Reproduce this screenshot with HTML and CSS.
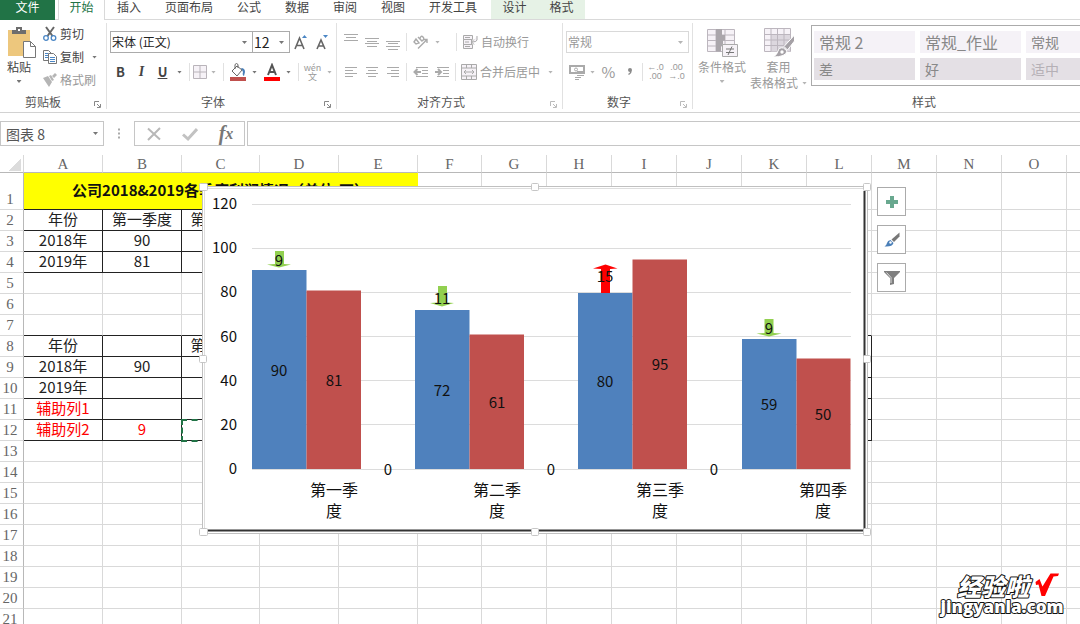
FILE: index.html
```html
<!DOCTYPE html>
<html lang="zh-CN">
<head>
<meta charset="utf-8">
<title>图表 8</title>
<link rel="stylesheet" href="styles.css">
</head>
<body>
<nav class="tabs">
  <button class="tab file">文件</button>
  <button class="tab active">开始</button>
  <button class="tab">插入</button>
  <button class="tab">页面布局</button>
  <button class="tab">公式</button>
  <button class="tab">数据</button>
  <button class="tab">审阅</button>
  <button class="tab">视图</button>
  <button class="tab">开发工具</button>
  <span class="context">
    <button class="tab">设计</button>
    <button class="tab">格式</button>
  </span>
</nav>

<section class="ribbon">
  <div class="group clipboard">
    <div class="tools">
      <button class="big paste">
        <svg width="30" height="32" viewBox="0 0 30 32"><path fill="#edc77d" d="M1 4h22v26H1z"/><path fill="#6d6d6d" d="M5 8V4h4V1h6v3h4v4z"/><path fill="#fff" d="M11 3h2v2h-2z"/><path fill="#fff" stroke="#777" d="M16.500 15.500h7l5 5v11h-12z"/><path fill="none" stroke="#777" d="M23.500 15.500v5h5"/></svg>
        <span>粘贴</span>
        <i class="arrow"></i>
      </button>
      <div class="stack">
        <button class="line"><svg width="14" height="16" viewBox="0 0 14 16"><path fill="none" stroke="#666" stroke-width="2" d="M3 1l6.500 9M11 1L4.500 10"/><circle cx="3" cy="12" r="2.300" fill="none" stroke="#4a86c5" stroke-width="1.300"/><circle cx="10.500" cy="12" r="2.300" fill="none" stroke="#4a86c5" stroke-width="1.300"/></svg>剪切</button>
        <button class="line"><svg width="14" height="16" viewBox="0 0 14 16"><path fill="#fff" stroke="#777" d="M.5 1.500h5l3 3v7h-8z"/><path stroke="#4a86c5" d="M2 4.500h3M2 6.500h3M2 8.500h3"/><path fill="#fff" stroke="#777" d="M5.500 4.500h5l3 3v7h-8z"/><path stroke="#4a86c5" d="M7 8.500h5M7 10.500h5M7 12.500h5"/></svg>复制<i class="arrow"></i></button>
        <button class="line off"><svg width="14" height="16" viewBox="0 0 14 16"><path fill="#b5b5b5" d="M0 6l5-2 4 6-3 5zM6 4l2-1 3 5-2 1zM9 4l3-3 2 2-3 3z"/></svg>格式刷</button>
      </div>
    </div>
    <footer>剪贴板<svg class="launch" width="7" height="7"><path d="M.5 5V.500H5M3 3l3 3M6.500 3v3.500H3"/></svg></footer>
  </div>

  <div class="group font">
    <div class="tools rows">
      <div class="row">
        <span class="combo name"><select aria-label="字体"><option>宋体 (正文)</option></select></span>
        <span class="combo size"><select aria-label="字号"><option>12</option></select></span>
        <button class="btn"><svg width="16" height="16" viewBox="0 0 16 16"><path fill="none" stroke="#666" stroke-width="1.600" d="M2 15L6.500 4 11 15M3.500 11.500h6"/><path fill="#4a86c5" d="M9 4l2.500-3L14 4z"/></svg></button>
        <button class="btn"><svg width="16" height="16" viewBox="0 0 16 16"><path fill="none" stroke="#666" stroke-width="1.600" d="M3 15L7 6l4 9M4.500 12h5"/><path fill="#4a86c5" d="M9 1h5l-2.500 3z"/></svg></button>
      </div>
      <div class="row">
        <button class="btn b">B</button>
        <button class="btn i">I</button>
        <button class="btn u">U</button><i class="arrow"></i>
        <hr>
        <button class="btn narrow"><svg width="14" height="14" viewBox="0 0 14 14"><path fill="#f6f2f7" stroke="#b9b4ba" d="M.5.5h13v13H.5zM7 .5v13M.5 7h13"/></svg></button><i class="arrow off"></i>
        <hr>
        <button class="btn"><svg width="18" height="18" viewBox="0 0 18 18"><path fill="#fff" stroke="#666" d="M3 8l5-5 5 4-5 6zM6 6V1.500q1.500-2 3 0V5"/><path fill="#4a7fb8" d="M12 5q4 0 4 4l-1 4q-2-1-1-4z"/><path fill="#c0504d" d="M1 14h16v4H1z"/></svg></button><i class="arrow"></i>
        <button class="btn"><svg width="18" height="18" viewBox="0 0 18 18"><path fill="none" stroke="#555" stroke-width="2" d="M5 12L9 2l4 10M6 9h6"/><path fill="#f00" d="M1 14h16v4H1z"/></svg></button><i class="arrow"></i>
        <hr>
        <button class="btn pinyin"><span>wén</span><span>文</span></button><i class="arrow off"></i>
      </div>
    </div>
    <footer>字体<svg class="launch" width="7" height="7"><path d="M.5 5V.500H5M3 3l3 3M6.500 3v3.500H3"/></svg></footer>
  </div>

  <div class="group align off">
    <div class="tools rows">
      <div class="row">
        <button class="btn"><svg width="16" height="16" viewBox="0 0 16 16"><path d="M1 .5h14M3 3.500h10M1 6.500h14"/></svg></button>
        <button class="btn"><svg width="16" height="16" viewBox="0 0 16 16"><path d="M1 4.500h14M3 7.500h10M1 9.500h14M3 12.500h10"/></svg></button>
        <button class="btn"><svg width="16" height="16" viewBox="0 0 16 16"><path d="M1 7.500h14M3 9.500h10M1 12.500h14M3 15.500h10"/></svg></button>
        <hr>
        <button class="btn"><svg width="16" height="16" viewBox="0 0 16 16"><path d="M5 14.500L14 5.500M10.500 5.500H14V9M1 8l2-3 3 4-3 1zM5 3l4 4q3-2 1-4T7 4.500" stroke-width="1.400"/></svg></button><i class="arrow"></i>
        <hr class="far">
        <button class="line"><svg width="16" height="16" viewBox="0 0 16 16"><path fill="#f6f2f7" d="M1.500 1.500h9v4h-9zM1.500 5.500h8v5h-8zM1.500 10.500h9v4h-9zM3 3.500h5M3 8h4M3 12.500h5M15 2v4q0 2-5 2M12 5.500L9.500 8l2.500 2.500"/></svg>自动换行</button>
      </div>
      <div class="row">
        <button class="btn"><svg width="16" height="16" viewBox="0 0 16 16"><path d="M2 3.500h12M2 6.500h8M2 9.500h12M2 12.500h8"/></svg></button>
        <button class="btn"><svg width="16" height="16" viewBox="0 0 16 16"><path d="M2 3.500h12M4 6.500h8M2 9.500h12M4 12.500h8"/></svg></button>
        <button class="btn"><svg width="16" height="16" viewBox="0 0 16 16"><path d="M2 3.500h12M6 6.500h8M2 9.500h12M6 12.500h8"/></svg></button>
        <hr>
        <button class="btn"><svg width="16" height="16" viewBox="0 0 16 16"><path d="M3 3.500h12M9 6.500h6M9 9.500h6M3 12.500h12"/><path stroke-width="2" d="M8 8H2M4.500 5L1.500 8l3 3"/></svg></button>
        <button class="btn"><svg width="16" height="16" viewBox="0 0 16 16"><path d="M3 3.500h12M9 6.500h6M9 9.500h6M3 12.500h12"/><path stroke-width="2" d="M1 8h6M4 5l3 3-3 3"/></svg></button>
        <hr>
        <button class="line"><svg width="16" height="16" viewBox="0 0 16 16"><path fill="#f6f2f7" d="M.5.5h15v15H.5zM.5 4h15M.5 12h15M5.500.5V4M10.500.5V4M5.500 12v3.500M10.500 12v3.500"/><path d="M3 8h10M5 6L3 8l2 2M11 6l2 2-2 2"/></svg>合并后居中<i class="arrow"></i></button>
      </div>
    </div>
    <footer>对齐方式<svg class="launch" width="7" height="7"><path d="M.5 5V.500H5M3 3l3 3M6.500 3v3.500H3"/></svg></footer>
  </div>

  <div class="group number off">
    <div class="tools rows">
      <div class="row">
        <span class="combo format"><select aria-label="数字格式"><option>常规</option></select></span>
      </div>
      <div class="row">
        <button class="btn"><svg width="16" height="16" viewBox="0 0 16 16"><path stroke-width="2" d="M1 2h14v7H1z"/><circle cx="7" cy="5.500" r="1.500"/><path fill="#f6f2f7" d="M8 7.500h7M8 9.500h7M8 11.500h7M6 13.500h6M6 15.500h4"/></svg></button><i class="arrow"></i>
        <button class="btn percent">%</button>
        <button class="btn comma"><svg width="8" height="12" viewBox="0 0 8 12"><path stroke="none" fill="#8a8a8a" d="M4 2a2 2 0 0 1 2 2q0 3-3 5l-1-1q2-1 2-2a2 2 0 0 1 0-4z"/></svg></button>
        <hr>
        <button class="btn decimals"><span>←.0</span><span>.00</span></button>
        <button class="btn decimals"><span>.00</span><span>→.0</span></button>
      </div>
    </div>
    <footer>数字<svg class="launch" width="7" height="7"><path d="M.5 5V.500H5M3 3l3 3M6.500 3v3.500H3"/></svg></footer>
  </div>

  <div class="group styles off">
    <div class="tools">
      <button class="big">
        <svg width="32" height="30" viewBox="0 0 32 30"><path fill="#f6f2f7" stroke="#bcb6be" d="M1.500 1.500h27v22h-27zM1.500 7h27M1.500 12.500h27M1.500 18h27M10 1.500v22M19 1.500v22"/><path stroke="none" fill="#aaa6ab" d="M10 1h6v6h-6zM10 7h9v5.500h-9zM10 12.500h7V18h-7zM10 18h5v5.500h-5z"/><path fill="#f6f2f7" stroke="#aaa" d="M16.500 16.500h15v12h-15z"/><path stroke="#777" d="M20 21h8M20 24.500h8M26 18.500l-4 8.500"/></svg>
        <span>条件格式</span>
        <i class="arrow"></i>
      </button>
      <button class="big">
        <svg width="32" height="30" viewBox="0 0 32 30"><path fill="#f6f2f7" stroke="#bcb6be" d="M1.500.5h26v23h-26z"/><path stroke="none" fill="#dcd7de" d="M8 6.500h19v17H8z"/><path stroke="#bcb6be" d="M1.500 6.500h26M1.500 12h26M1.500 17.500h26M8 .5v23M14.500.5v23M21 .5v23"/><path stroke="#fff" fill="#a5a1a6" d="M31.500 7v6l-7 9-3.500-3.500zM20.500 20l3.500 3q-1 6-14 6 4-2 5-6t5.500-3z"/><circle cx="19" cy="24" r="1.700" fill="#fff" stroke="none"/></svg>
        <span>套用</span>
        <span class="with-arrow">表格格式<i class="arrow"></i></span>
      </button>
      <div class="gallery">
        <button class="style">常规 2</button>
        <button class="style">常规_作业</button>
        <button class="style small">常规</button>
        <button class="style dark">差</button>
        <button class="style dark">好</button>
        <button class="style dark small pale">适中</button>
      </div>
    </div>
    <footer>样式</footer>
  </div>
</section>

<section class="formula">
  <span class="combo cellname"><input aria-label="名称框" value="图表 8"></span>
  <span class="dots"></span>
  <div class="actions">
    <button aria-label="取消"><svg width="16" height="16" viewBox="0 0 16 16"><path fill="none" stroke="#b8b8b8" stroke-width="2" d="M2 2.500l12 11M14 2L2 14"/></svg></button>
    <button aria-label="输入"><svg width="16" height="16" viewBox="0 0 16 16"><path fill="none" stroke="#c2c2c2" stroke-width="3" d="M1 8.500L6 13l9-10"/></svg></button>
    <button class="fx">f<span>x</span></button>
  </div>
  <input class="entry" aria-label="编辑栏">
</section>

<main class="sheet">
  <table class="grid" id="grid"></table>

  <svg class="chart" width="670" height="350" viewBox="202 186 670 350" role="img" aria-label="季度利润图表">
    <path fill="#fff" d="M202 186h666v348H202z"/>
    <path class="frame" d="M202.500 186.500h665v347h-665z"/>
    <path class="frame light" d="M204.500 188.500h660v342h-660z"/>
    <path class="shadow" d="M207 530.500h657.500V191"/>
    <path class="rule" d="M252 204.500h599M252 248.500h599M252 292.500h599M252 336.500h599M252 380.500h599M252 424.500h599M252 469.500h599"/>
    <g class="blue"><rect x="252" y="270" width="54.500" height="199"/><rect x="415" y="310" width="54.500" height="159"/><rect x="578" y="293" width="54.500" height="176"/><rect x="742" y="339" width="54.500" height="130"/></g>
    <g class="red"><rect x="306.500" y="290.500" width="54.500" height="178.500"/><rect x="469.500" y="334.500" width="54.500" height="134.500"/><rect x="632.500" y="259.500" width="54.500" height="209.500"/><rect x="796.500" y="358.500" width="54" height="110.500"/></g>
    <g fill="#92d050"><path d="M275 251h9v13l7 .5-12 3-12-3 8-.5z"/><path d="M438 286h9v16.500l7 .5-12 3.500-12-3.500 8-.5z"/><path d="M764.500 319h9v14l8 .5-12.500 3-12.500-3 8-.5z"/></g>
    <path fill="#f00" d="M605.500 264.500l12 4-7.500.5v24h-9v-24l-8-.5z"/>
    <g class="axis"><text x="237" y="209">120</text><text x="237" y="253">100</text><text x="237" y="297">80</text><text x="237" y="342">60</text><text x="237" y="386">40</text><text x="237" y="430">20</text><text x="237" y="474">0</text></g>
    <g class="values">
      <text x="279" y="266">9</text><text x="442" y="304">11</text><text x="605" y="282">15</text><text x="769" y="334">9</text>
      <text x="279" y="376">90</text><text x="334" y="386">81</text><text x="442" y="396">72</text><text x="497" y="408">61</text>
      <text x="605" y="387">80</text><text x="660" y="370">95</text><text x="769" y="410">59</text><text x="823" y="420">50</text>
      <text x="388" y="475">0</text><text x="551" y="475">0</text><text x="714" y="475">0</text>
    </g>
    <g class="category">
      <text x="334" y="496">第一季<tspan x="334" dy="21">度</tspan></text>
      <text x="497" y="496">第二季<tspan x="497" dy="21">度</tspan></text>
      <text x="660" y="496">第三季<tspan x="660" dy="21">度</tspan></text>
      <text x="823" y="496">第四季<tspan x="823" dy="21">度</tspan></text>
    </g>
  </svg>
  <svg class="handles" width="674" height="354" viewBox="199 183 674 354" aria-hidden="true">
    <rect x="199.500" y="183.500" width="8" height="7" rx="1"/><rect x="531.500" y="183.500" width="7" height="7" rx="1"/><rect x="863.500" y="183.500" width="7" height="7" rx="1"/>
    <rect x="199.500" y="355.500" width="7" height="7" rx="1"/><rect x="863.500" y="355.500" width="7" height="7" rx="1"/>
    <rect x="199.500" y="528.500" width="8" height="7" rx="1"/><rect x="531.500" y="528.500" width="7" height="7" rx="1"/><rect x="863.500" y="528.500" width="7" height="7" rx="1"/>
  </svg>

  <div class="chart-tools">
    <button aria-label="图表元素"><svg width="16" height="16" viewBox="0 0 16 16"><path fill="#69a88f" d="M6 2h4v4h4v4h-4v4H6v-4H2V6h4z"/></svg></button>
    <button aria-label="图表样式"><svg width="16" height="16" viewBox="0 0 16 16"><path fill="#777" d="M15.500.5v4L10 10 7.500 7.500z"/><path fill="#4a7fb8" d="M6.500 8l3 3q-1 4-9 3.500 2-1 2.500-3.500T6.500 8z"/><circle cx="6.500" cy="10.500" r="1.200" fill="#fff"/></svg></button>
    <button aria-label="图表筛选器"><svg width="16" height="16" viewBox="0 0 16 16"><path fill="#7f7f7f" d="M0 1h16v1l-6 6v6l-4 1V8L0 2z"/><path stroke="#ddd" d="M2.500 2.500L7 7.500V13" fill="none"/></svg></button>
  </div>

  <svg class="watermark" width="130" height="54" viewBox="0 0 130 54">
    <text class="cn" x="20" y="26">经验啦</text>
    <path fill="#f00" d="M98.500 12l4-3 3 7.500L113.500 3.500H122l-1 2.500-4.500.5L108 26h-3.500l-3-11.500-2.500.5z"/>
    <text class="en" x="65" y="43">jingyanla.com</text>
  </svg>
</main>
<script src="script.js"></script>
</body>
</html>
```

FILE: styles.css
```css
* { box-sizing: border-box; }
body {
  margin: 0;
  height: 100vh;
  overflow: hidden;
  display: flex;
  flex-direction: column;
  background: #fff;
  color: #444;
  font: 12px/16px "Noto Sans CJK SC", sans-serif;
}
button, input, select { font: inherit; color: inherit; border: 0; padding: 0; margin: 0; background: none; outline: 0; border-radius: 0; }
button { display: flex; align-items: center; justify-content: center; white-space: nowrap; }
svg { flex: none; display: block; }

/* tabs */
.tabs { display: flex; height: 20px; flex: none; border-bottom: 1px solid #d9d9d9; }
.tab { padding: 0 12px 6px; height: 20px; line-height: 14px; }
.file { width: 55px; margin-right: 3px; background: #217346; color: #fff; }
.active { padding: 0 11px 6px; width: 47px; background: #fff; color: #217346; border: solid #d9d9d9; border-width: 0 1px; }
.context { display: flex; margin-left: 2px; background: #e6f2e6; height: 19px; }
.context .tab { width: 47px; }

/* ribbon */
.ribbon { display: flex; flex: none; height: 93px; border-bottom: 1px solid #d2d2d2; overflow: hidden; }
.group { display: flex; flex-direction: column; flex: none; margin: 3px 0; border-right: 1px solid #e1e1e1; }
.tools { flex: 1; display: flex; align-items: flex-start; }
.group footer { position: relative; text-align: center; height: 15px; color: #555; }
.launch { position: absolute; right: 5px; bottom: 1px; fill: none; stroke: #888; }
.off { color: #999; }
.off .launch { stroke: #bbb; }
.clipboard { width: 107px; }
.clipboard footer { padding-right: 20px; }
.font { width: 230px; padding-left: 3px; }
.font footer { padding-right: 20px; }
.align { width: 226px; padding-left: 3px; }
.align footer { padding-right: 20px; }
.number { width: 130px; padding-left: 3px; }
.number footer { padding-right: 20px; }
.styles { flex: 1; min-width: 0; border: 0; padding-left: 5px; }
.styles footer { padding-left: 70px; }
.styles .tools { gap: 4px; }

.arrow { flex: none; width: 5px; height: 3px; margin: 0 4px; background: #777; clip-path: polygon(0 0, 100% 0, 50% 100%); }
.off .arrow, .arrow.off { background: #b5b5b5; }
.with-arrow { display: flex; align-items: center; }
.with-arrow .arrow { margin-right: 0; }

.big { flex-direction: column; justify-content: flex-start; padding-top: 5px; }
.big svg { margin-bottom: 1px; }
.big > .arrow { margin-top: 5px; }
.paste { width: 38px; padding: 3px 0 0; }
.paste svg { margin-left: 6px; }
.stack { display: flex; flex-direction: column; gap: 7px; padding: 3px 0 0 5px; }
.line { gap: 3px; height: 16px; }
.line .arrow { margin-left: 5px; }
.stack .line { justify-content: flex-start; }
.row .line { padding-left: 2px; }

.rows { flex-direction: column; gap: 8px; padding-top: 8px; }
.row { display: flex; align-items: center; height: 22px; }
.btn { width: 21px; height: 22px; }
.btn.narrow { width: 14px; }
.row hr { width: 1px; height: 18px; margin: 0 3px; border: 0; background: #e1e1e1; }
.row hr.far { margin-left: 12px; }
.b { font-weight: bold; font-size: 13px; }
.i { font: italic bold 14px "Liberation Serif", serif; }
.u { font-weight: bold; font-size: 13px; text-decoration: underline; }
.pinyin, .decimals { flex-direction: column; font-size: 9px; line-height: 9px; color: #999; }
.decimals { font-family: "Liberation Sans", sans-serif; }
.percent { font-size: 15px; }
.number .row .arrow { margin: 0 3px; }
.number .row hr { margin: 0 2px; }
.align svg, .number .btn svg, .styles svg { fill: none; stroke: #aaa; }

.combo { position: relative; display: flex; height: 22px; border: 1px solid #ababab; background: #fff; color: #222; }
.combo::after { content: ""; position: absolute; right: 5px; top: 9px; width: 5px; height: 3px; background: #777; clip-path: polygon(0 0, 100% 0, 50% 100%); }
.combo select { appearance: none; width: 100%; padding-left: 1px; }
.name { width: 143px; }
.size { width: 38px; margin-left: -1px; }
.size select { font-size: 14px; }
.format { width: 123px; border-color: #d9d9d9; color: #999; }
.format::after { background: #b5b5b5; }

.gallery {
  flex: 1;
  min-width: 0;
  display: grid;
  grid-template-columns: repeat(3, 101px);
  grid-auto-rows: 22px;
  gap: 5px;
  height: 61px;
  margin-top: 2px;
  padding: 5px 2px;
  border: 1px solid #ababab;
  border-right: 0;
  overflow: hidden;
}
.style { justify-content: flex-start; padding-left: 5px; background: #f5f2f7; color: #888; font-size: 16px; }
.style.dark { background: #e4e0e5; font-size: 14px; }
.style.small { font-size: 14px; }
.style.pale { color: #b5b0b6; }

/* formula bar */
.formula { display: flex; flex: none; margin-top: 8px; height: 25px; }
.cellname { width: 104px; height: 25px; border-color: #c6c6c6; }
.cellname::after { top: 10px; }
.cellname input { width: 100%; padding-left: 5px; font-size: 14px; color: #555; }
.dots { width: 30px; background: radial-gradient(circle, #aaa 1px, transparent 1px) center 50% / 30px 4px; margin: 6px 0; }
.actions { display: flex; align-items: center; width: 111px; padding-left: 1px; border: 1px solid #c6c6c6; }
.actions button { width: 36px; height: 23px; }
.fx { font: italic bold 20px "Liberation Serif", serif; color: #777; }
.fx span { font-size: 16px; }
.entry { flex: 1; min-width: 0; margin-left: 2px; border: 1px solid #c6c6c6; border-right: 0; }

/* sheet */
.sheet { position: relative; flex: 1; overflow: hidden; padding-top: 9px; }
.grid { table-layout: fixed; border-collapse: separate; border-spacing: 0; }
.grid th, .grid td { padding: 0; height: 21px; border: solid #d9d9d9; border-width: 0 1px 1px 0; text-align: center; white-space: nowrap; }
.grid th { font: 15px/19px "Liberation Serif", "Noto Sans CJK SC", serif; color: #666; vertical-align: bottom; }
.grid thead th { height: 18px; line-height: 16px; border-bottom-color: #b8b8b8; }
.grid tbody th { border-right-color: #b8b8b8; padding-right: 3px; }
.grid td { font-size: 15px; line-height: 18px; color: #222; vertical-align: top; }
.grid .first > * { height: 37px; }
.grid .title { background: #ff0; border-color: #ff0 #ff0 #222; color: #111; font-weight: bold; line-height: 33px; }
.grid .boxed { border-color: #222; }
.grid .help { color: #f00; }
.grid .marching { outline: 2px dashed #217346; outline-offset: -1px; }
.corner { background: linear-gradient(135deg, transparent 50%, #dcdcdc 50%) 8px 3px / 13px 13px no-repeat; }

/* floating objects */
.chart { position: absolute; left: 202px; top: 40px; }
.handles { position: absolute; left: 199px; top: 37px; fill: #fff; stroke: #c6c6c6; }
.frame { fill: none; stroke: #c0c0c0; }
.light { stroke: #dedede; }
.shadow { fill: none; stroke: #333; stroke-width: 2; }
.rule { stroke: #dcdcdc; }
.blue { fill: #4f81bd; }
.red { fill: #c0504d; }
.chart text { font-size: 15px; fill: #111; }
.axis { text-anchor: end; }
.values, .category { text-anchor: middle; }
.chart .category text { font-size: 16px; }
.chart-tools { position: absolute; left: 877px; top: 41px; display: flex; flex-direction: column; gap: 9px; }
.chart-tools button { width: 29px; height: 29px; border: 1px solid #ababab; background: #fff; }
.watermark { position: absolute; right: 13px; bottom: 0; }
.watermark text { fill: #fff; stroke: #111; stroke-width: 2px; paint-order: stroke; stroke-linejoin: round; font-weight: 900; }
.cn { font-size: 24px; font-style: italic; }
.en { font-family: "Open Sans", sans-serif; font-size: 17px; text-anchor: middle; }
```

FILE: script.js
```js
const columnWidths = {
  A: 79, B: 79, C: 78, D: 79, E: 79, F: 64, G: 65, H: 65,
  I: 65, J: 65, K: 65, L: 65, M: 65, N: 65, O: 65, P: 65
};
const columns = Object.keys(columnWidths);
const headerWidth = 24;
const cells = {
  A2: "年份", B2: "第一季度", C2: "第二季度", D2: "第三季度", E2: "第四季度",
  A3: "2018年", B3: "90", A4: "2019年", B4: "81",
  A8: "年份", C8: "第二季度", A9: "2018年", B9: "90", A10: "2019年",
  A11: "辅助列1", A12: "辅助列2", B12: "9"
};
const grid = document.getElementById("grid");

const group = document.createElement("colgroup");
let total = 0;
[headerWidth, ...Object.values(columnWidths)].forEach((width) => {
  const col = document.createElement("col");
  col.style.width = width + "px";
  total += width;
  group.append(col);
});
grid.append(group);
grid.style.width = total + "px";

const head = grid.createTHead().insertRow();
["", ...columns].forEach((name, i) => {
  const th = document.createElement("th");
  th.textContent = name;
  if (i === 0) th.className = "corner";
  head.append(th);
});
head.lastChild.textContent = "";

const body = grid.createTBody();
for (let r = 1; r <= 21; r++) {
  const row = body.insertRow();
  const th = document.createElement("th");
  th.textContent = r;
  row.append(th);
  if (r === 1) row.className = "first";
  columns.forEach((name, c) => {
    if (r === 1 && c > 0 && c < 5) return;
    const td = row.insertCell();
    td.textContent = cells[name + r] || "";
    if (r === 1 && c === 0) {
      td.colSpan = 5;
      td.className = "title";
      td.textContent = "公司2018&2019各季度利润情况（单位:万）";
    }
    if ((r >= 2 && r <= 4 && c < 5) || (r >= 8 && r <= 12 && c < 12)) td.classList.add("boxed");
    if (r === 7 && c < 12) td.style.borderBottomColor = "#222";
    if (r >= 11) td.classList.add("help");
    if (name + r === "C12") td.classList.add("marching");
  });
}
```
